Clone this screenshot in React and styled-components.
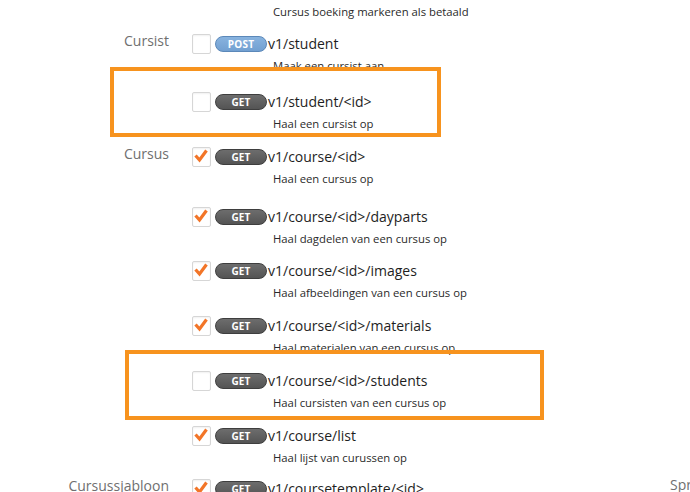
import React from "react";
import styled, { createGlobalStyle } from "styled-components";

const Global = createGlobalStyle`
  html, body { margin: 0; padding: 0; background: #fff; }
  body { width: 690px; height: 492px; overflow: hidden; font-family: "Open Sans", "Liberation Sans", sans-serif; }
`;

const Page = styled.div`
  position: relative;
  width: 690px;
  height: 492px;
  overflow: hidden;
`;

const Columns = styled.div`
  display: flex;
`;

const LeftColumn = styled.div`
  flex: 0 0 640px;
  display: flex;
  flex-direction: column;
`;

const RightColumn = styled.div`
  flex: 1;
  padding: 477px 0 0 30px;
`;

const Group = styled.div`
  display: grid;
  grid-template-columns: 169px 1fr;
  column-gap: 23px;
`;

const GroupLabel = styled.div`
  text-align: ${(p) => (p.$left ? "left" : "right")};
  font-size: 14px;
  line-height: 16px;
  color: #6f6f6f;
  white-space: nowrap;
`;

const Items = styled.div`
  display: flex;
  flex-direction: column;
`;

const Item = styled.div`
  height: ${(p) => p.$h}px;
`;

const MainLine = styled.div`
  display: flex;
  align-items: center;
  height: 22px;
`;

const Box = styled.span`
  box-sizing: border-box;
  width: 19px;
  height: 20px;
  border: 1px solid #d6d6d6;
  border-radius: 2px;
  background: #fff;
  box-shadow: inset 0 1px 2px rgba(0,0,0,0.06);
  display: flex;
  align-items: flex-start;
  justify-content: flex-start;
  margin-right: 4px;
  flex-shrink: 0;
`;

const Badge = styled.span`
  box-sizing: border-box;
  width: 52px;
  height: 16px;
  border-radius: 8px;
  border: 1px solid ${(p) => (p.$method === "POST" ? "#5b88b9" : "#3e3e3e")};
  background: ${(p) =>
    p.$method === "POST"
      ? "linear-gradient(#88b3df, #72a0d1)"
      : "linear-gradient(#6d6d6d, #545454)"};
  color: #fff;
  font-size: 10px;
  font-weight: 700;
  line-height: 14px;
  text-align: center;
  letter-spacing: 0.2px;
  margin-right: 1px;
  flex-shrink: 0;
`;

const Path = styled.span`
  font-size: 14px;
  color: #1e1e1e;
  white-space: nowrap;
  line-height: 22px;
`;

const Desc = styled.div`
  margin-top: ${(p) => (p.$lead ? 4 : 3)}px;
  padding-left: 81px;
  font-size: 11.3px;
  line-height: 16px;
  color: #2a2a2a;
  white-space: nowrap;
`;

const Highlight = styled.div`
  position: absolute;
  box-sizing: border-box;
  border: 4px solid #f7931e;
  pointer-events: none;
`;

const Check = () => (
  <svg width="17" height="16" viewBox="0 0 17 16">
    <path d="M2.5 7.5 L6.5 12 L13.5 2.5" fill="none" stroke="#f27528" strokeWidth="3.2" />
  </svg>
);

const groups = [
  {
    label: "",
    items: [
      { lead: true, path: "v1/booking/paid", desc: "Cursus boeking markeren als betaald", h: 33 },
    ],
  },
  {
    label: "Cursist",
    items: [
      { method: "POST", path: "v1/student", desc: "Maak een cursist aan", checked: false, h: 58 },
      { method: "GET", path: "v1/student/<id>", desc: "Haal een cursist op", checked: false, h: 55 },
    ],
  },
  {
    label: "Cursus",
    items: [
      { method: "GET", path: "v1/course/<id>", desc: "Haal een cursus op", checked: true, h: 60 },
      { method: "GET", path: "v1/course/<id>/dayparts", desc: "Haal dagdelen van een cursus op", checked: true, h: 54 },
      { method: "GET", path: "v1/course/<id>/images", desc: "Haal afbeeldingen van een cursus op", checked: true, h: 55 },
      { method: "GET", path: "v1/course/<id>/materials", desc: "Haal materialen van een cursus op", checked: true, h: 55 },
      { method: "GET", path: "v1/course/<id>/students", desc: "Haal cursisten van een cursus op", checked: false, h: 55 },
      { method: "GET", path: "v1/course/list", desc: "Haal lijst van curussen op", checked: true, h: 53 },
    ],
  },
  {
    label: "Cursussjabloon",
    items: [
      { method: "GET", path: "v1/coursetemplate/<id>", desc: "Haal een cursussjabloon op", checked: true, h: 55 },
    ],
  },
];

export default function App() {
  return (
    <>
      <Global />
      <Page>
        <Columns>
          <LeftColumn>
            {groups.map((g, gi) => (
              <Group key={gi}>
                <GroupLabel>{g.label}</GroupLabel>
                <Items>
                  {g.items.map((it) => (
                    <Item key={it.path} $h={it.h}>
                      {!it.lead && (
                        <MainLine>
                          <Box>{it.checked && <Check />}</Box>
                          <Badge $method={it.method}>{it.method}</Badge>
                          <Path>{it.path}</Path>
                        </MainLine>
                      )}
                      <Desc $lead={it.lead}>{it.desc}</Desc>
                    </Item>
                  ))}
                </Items>
              </Group>
            ))}
          </LeftColumn>
          <RightColumn>
            <GroupLabel $left>Sprekers</GroupLabel>
          </RightColumn>
        </Columns>
        <Highlight style={{ left: 110, top: 67, width: 331, height: 70 }} />
        <Highlight style={{ left: 125, top: 350, width: 419, height: 70 }} />
      </Page>
    </>
  );
}
